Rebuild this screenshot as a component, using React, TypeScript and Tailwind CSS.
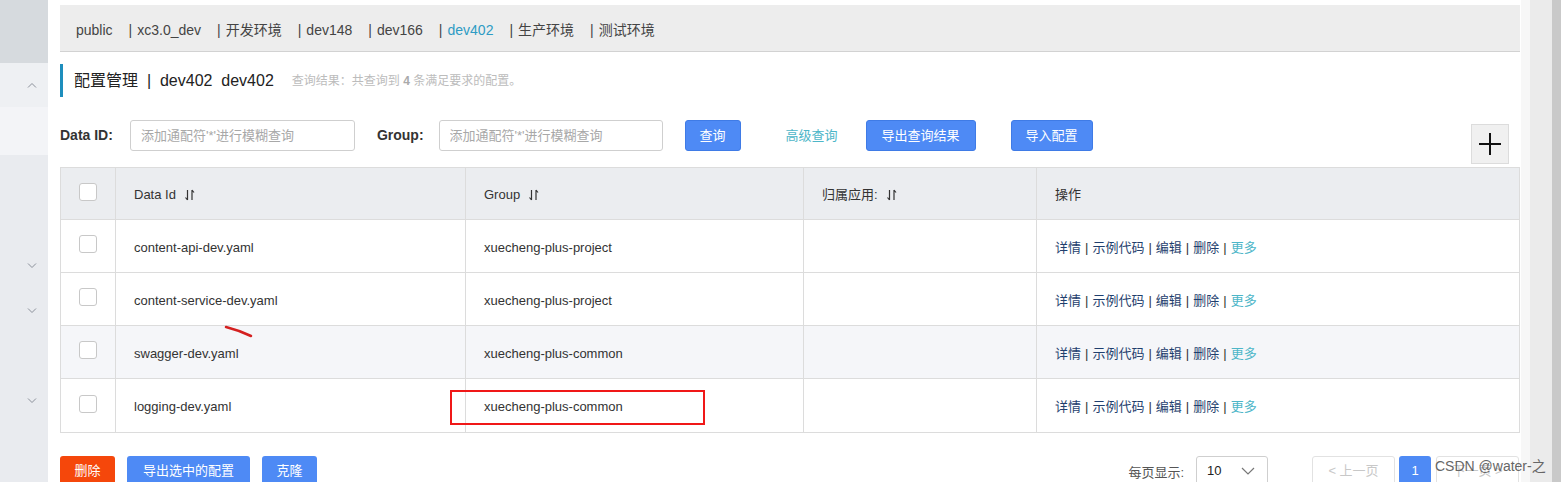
import { FC } from "react";

const envs = ["public", "xc3.0_dev", "开发环境", "dev148", "dev166", "dev402", "生产环境", "测试环境"];

const rows = [
  { id: "content-api-dev.yaml", group: "xuecheng-plus-project" },
  { id: "content-service-dev.yaml", group: "xuecheng-plus-project" },
  { id: "swagger-dev.yaml", group: "xuecheng-plus-common", hover: true },
  { id: "logging-dev.yaml", group: "xuecheng-plus-common" },
];

const font = { fontFamily: '"Liberation Sans", "Noto Sans CJK SC", sans-serif' };

// little ↓↑ sort mark next to column titles
const SortIcon: FC = () => (
  <svg width="12" height="14" viewBox="0 0 12 14" className="ml-2 text-[#333]">
    <path d="M3.5 2v10M1.5 9.5l2 2.5" stroke="currentColor" strokeWidth="1.2" fill="none" />
    <path d="M8 12V2M8 2l2 2.5" stroke="currentColor" strokeWidth="1.2" fill="none" />
  </svg>
);

const Chevron: FC<{ up?: boolean }> = ({ up }) => (
  <svg width="10" height="6" viewBox="0 0 10 6" className="text-[#8a8f99]">
    <path d={up ? "M1 5.5L5 1.5l4 4" : "M1 .5l4 4 4-4"} stroke="currentColor" strokeWidth="1" fill="none" />
  </svg>
);

const Checkbox: FC = () => (
  <div className="w-[18px] h-[18px] rounded-[3px] border border-[#c8c8c8] bg-white" />
);

const App: FC = () => {
  return (
    <div className="relative flex w-[1561px] h-[482px] overflow-hidden bg-white text-[13px] text-[#333]" style={font}>
      {/* left menu strip */}
      <div className="w-[48px] shrink-0 flex flex-col bg-[#e9ebef]">
        <div className="h-[63px] bg-[#d6dade]" />
        <div className="h-[44px] bg-[#eef0f3] flex items-center justify-end pr-[11px]">
          <Chevron up />
        </div>
        <div className="h-[48px] bg-[#f3f4f7]" />
        <div className="flex justify-end pr-[11px] mt-[108px]"><Chevron /></div>
        <div className="flex justify-end pr-[11px] mt-[39px]"><Chevron /></div>
        <div className="flex justify-end pr-[11px] mt-[84px]"><Chevron /></div>
      </div>

      {/* main */}
      <div className="flex-1 pl-[12px] pt-[5px] pr-[1px]">
        <div className="h-[47px] bg-[#ededed] border-b border-[#d2d2d2] flex items-center pl-[16px] pt-[4px] text-[14px]">
          {envs.map((e, i) => (
            <span key={e} className={`mr-[16px] ${e === "dev402" ? "text-[#2e9bc4]" : "text-[#444]"}`}>
              {i > 0 && <span className="text-[#444] mr-[5px]">|</span>}
              {e}
            </span>
          ))}
        </div>

        <div className="mt-[12px] h-[33px] border-l-[3px] border-[#1e8ebd] flex items-center pl-[11px]">
          <span className="text-[16px] text-[#222]">配置管理&nbsp; |&nbsp; dev402&nbsp; dev402</span>
          <span className="ml-[18px] text-[12px] text-[#bcbcbc]">
            查询结果：共查询到 <b className="text-[#aaa]">4</b> 条满足要求的配置。
          </span>
        </div>

        <div className="mt-[23px] flex items-start h-[44px]">
          <label className="font-bold text-[14px] text-[#333] h-[31px] flex items-center">Data ID:</label>
          <input
            placeholder="添加通配符'*'进行模糊查询"
            className="ml-[17px] w-[225px] h-[31px] border border-[#cfcfcf] rounded-[3px] px-[10px] text-[13px] placeholder:text-[#a8a8a8] outline-none"
          />
          <label className="ml-[22px] font-bold text-[14px] text-[#333] h-[31px] flex items-center">Group:</label>
          <input
            placeholder="添加通配符'*'进行模糊查询"
            className="ml-[15px] w-[224px] h-[31px] border border-[#cfcfcf] rounded-[3px] px-[10px] text-[13px] placeholder:text-[#a8a8a8] outline-none"
          />
          <button className="ml-[22px] w-[56px] h-[31px] rounded-[3px] bg-[#4e8af5] text-white border border-[#3f7be6]">查询</button>
          <button className="ml-[45px] h-[31px] text-[#4db6c8]">高级查询</button>
          <button className="ml-[28px] w-[110px] h-[31px] rounded-[3px] bg-[#4e8af5] text-white border border-[#3f7be6]">导出查询结果</button>
          <button className="ml-[35px] w-[82px] h-[31px] rounded-[3px] bg-[#4e8af5] text-white border border-[#3f7be6]">导入配置</button>
          <button className="ml-auto mr-[11px] mt-[4px] w-[38px] h-[40px] bg-[#f0f0f0] border border-[#dcdcdc] flex items-center justify-center">
            <svg width="22" height="22" viewBox="0 0 22 22">
              <path d="M11 0v22M0 11h22" stroke="#111" strokeWidth="2" />
            </svg>
          </button>
        </div>

        {/* table */}
        <div className="relative mt-[3px] w-[1460px] border border-[#dcdcdc]">
          <div className="grid grid-cols-[55px_350px_338px_233px_1fr] h-[52px] bg-[#ebedf0] border-b border-[#dcdcdc]">
            <div className="flex items-center justify-center border-r border-[#dcdcdc] pb-[4px]"><Checkbox /></div>
            <div className="flex items-center pl-[18px] pt-[2px] border-r border-[#dcdcdc]">Data Id<SortIcon /></div>
            <div className="flex items-center pl-[18px] pt-[2px] border-r border-[#dcdcdc]">Group<SortIcon /></div>
            <div className="flex items-center pl-[18px] pt-[2px] border-r border-[#dcdcdc]">归属应用:<SortIcon /></div>
            <div className="flex items-center pl-[18px] pt-[2px]">操作</div>
          </div>
          {rows.map((r, i) => (
            <div
              key={r.id}
              className={`grid grid-cols-[55px_350px_338px_233px_1fr] h-[53px] ${i < rows.length - 1 ? "border-b border-[#dcdcdc]" : ""} ${r.hover ? "bg-[#f5f6f9]" : "bg-white"}`}
            >
              <div className="flex items-center justify-center border-r border-[#dcdcdc] pb-[4px]"><Checkbox /></div>
              <div className="flex items-center pl-[18px] pt-[3px] border-r border-[#dcdcdc]">{r.id}</div>
              <div className="flex items-center pl-[18px] pt-[3px] border-r border-[#dcdcdc]">{r.group}</div>
              <div className="border-r border-[#dcdcdc]" />
              <div className="flex items-center pl-[18px] pt-[3px] text-[#1f3f6e]">
                详情<span className="mx-[4px] text-[#333]">|</span>示例代码<span className="mx-[4px] text-[#333]">|</span>编辑
                <span className="mx-[4px] text-[#333]">|</span>删除<span className="mx-[4px] text-[#333]">|</span>
                <span className="text-[#4db6c8]">更多</span>
              </div>
            </div>
          ))}

          {/* hand-drawn annotations */}
          <div className="absolute left-[389px] top-[222px] w-[255px] h-[35px] border-2 border-[#f01818]" />
          <svg className="absolute left-[163px] top-[157px]" width="30" height="14" viewBox="0 0 30 14">
            <path d="M2 2 Q14 5 27 11" stroke="#d42020" strokeWidth="2.5" fill="none" strokeLinecap="round" />
          </svg>
        </div>

        {/* footer */}
        <div className="mt-[23px] flex items-start">
          <button className="w-[55px] h-[30px] rounded-[3px] bg-[#f5470b] text-white">删除</button>
          <button className="ml-[12px] w-[123px] h-[30px] rounded-[3px] bg-[#4e8af5] text-white">导出选中的配置</button>
          <button className="ml-[12px] w-[55px] h-[30px] rounded-[3px] bg-[#4e8af5] text-white">克隆</button>
          <span className="ml-auto mt-[7px] text-[#555]">每页显示:</span>
          <div className="ml-[12px] w-[72px] h-[30px] border border-[#cfcfcf] rounded-[3px] flex items-center justify-between pl-[10px] pr-[12px] text-[#222]">
            10
            <svg width="14" height="8" viewBox="0 0 14 8"><path d="M1 1l6 6 6-6" stroke="#777" strokeWidth="1.2" fill="none" /></svg>
          </div>
          <button className="ml-[44px] w-[83px] h-[30px] rounded-[3px] border border-[#e2e2e2] text-[#c8c8c8]">&lt; 上一页</button>
          <button className="ml-[4px] w-[32px] h-[30px] rounded-[3px] bg-[#4e8af5] text-white">1</button>
          <button className="ml-[5px] mr-[1px] w-[83px] h-[30px] rounded-[3px] border border-[#e2e2e2] text-[#c8c8c8]">下一页 &gt;</button>
        </div>
      </div>

      {/* right scroll strip */}
      <div className="w-[40px] shrink-0 flex">
        <div className="w-[9px] bg-[#f7f7f7]" />
        <div className="w-[22px] bg-[#ebebeb]" />
        <div className="flex-1 bg-[#c9c9c9]" />
      </div>

      <span className="absolute left-[1435px] top-[456px] text-[14px] text-[#666]" style={font}>CSDN @water-之</span>
    </div>
  );
};

export default App;
